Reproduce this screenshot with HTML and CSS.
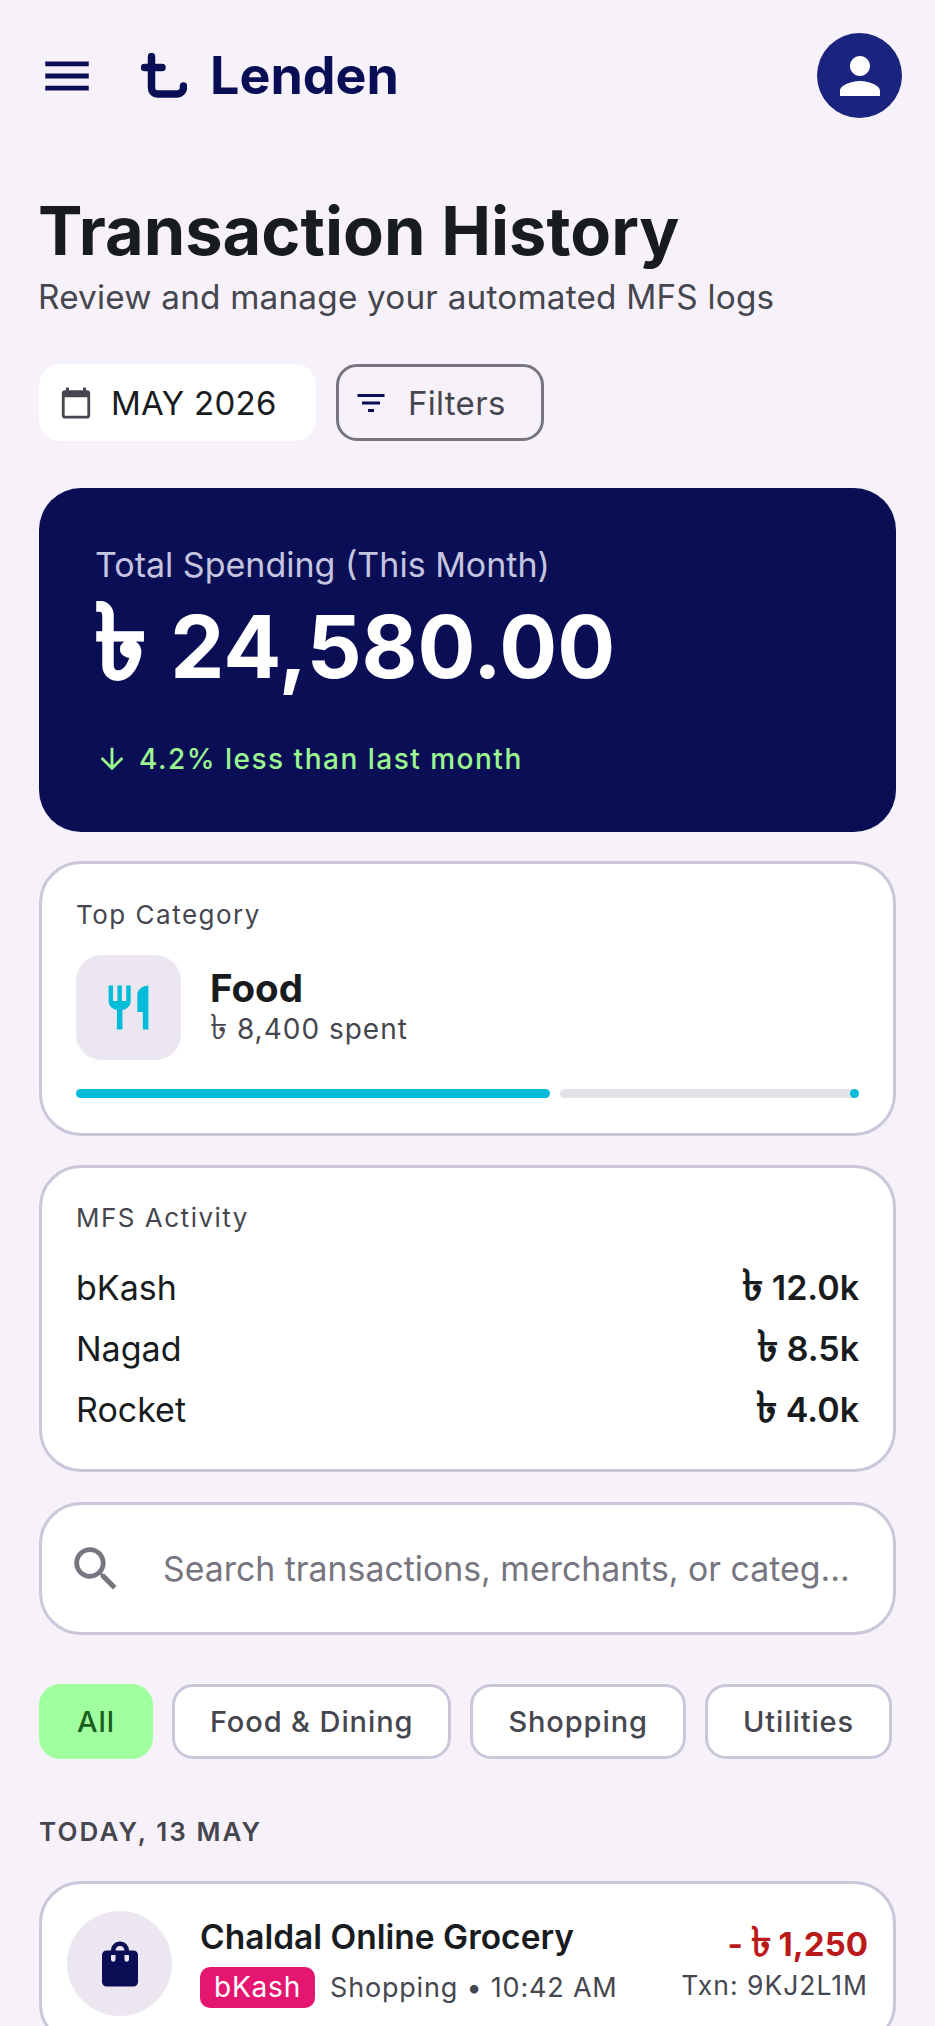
FILE: index.html
```html
<!DOCTYPE html>
<html lang="en">
<head>
    <meta charset="UTF-8">
    <meta name="viewport" content="width=device-width, initial-scale=1.0">
    <title>Lenden - Transaction History</title>
    <link rel="stylesheet" href="styles.css">
</head>
<body>
<div class="page">

    <header class="topbar">
        <svg class="menu-icon" viewBox="0 0 24 24"><path d="M3 18h18v-2H3v2zm0-5h18v-2H3v2zm0-7v2h18V6H3z"/></svg>
        <svg class="logo-mark" viewBox="0 0 46 45"><path d="M10.5 3.5V35a6 6 0 0 0 6 6H36a6.500 6.500 0 0 0 6.500-6.500V33M3.500 14.500H21"/></svg>
        <span class="brand">Lenden</span>
        <div class="avatar">
            <svg viewBox="0 0 24 24"><path d="M12 12c2.210 0 4-1.790 4-4s-1.790-4-4-4-4 1.790-4 4 1.790 4 4 4zm0 2c-2.670 0-8 1.340-8 4v2h16v-2c0-2.660-5.330-4-8-4z"/></svg>
        </div>
    </header>

    <h1>Transaction History</h1>
    <p class="subtitle">Review and manage your automated MFS logs</p>

    <div class="toolbar">
        <div class="month-btn">
            <svg viewBox="0 0 24 24"><path d="M20 3h-1V1h-2v2H7V1H5v2H4c-1.100 0-2 .9-2 2v16c0 1.100.9 2 2 2h16c1.100 0 2-.9 2-2V5c0-1.100-.9-2-2-2zm0 18H4V8h16v13z"/></svg>
            <span>MAY 2026</span>
        </div>
        <div class="filter-btn">
            <svg viewBox="0 0 24 24"><path d="M10 18h4v-2h-4v2zM3 6v2h18V6H3zm3 7h12v-2H6v2z"/></svg>
            <span>Filters</span>
        </div>
    </div>

    <section class="hero">
        <div class="hero-label">Total Spending (This Month)</div>
        <div class="hero-amount"><span class="taka">৳</span> 24,580.00</div>
        <div class="hero-delta">
            <svg viewBox="0 0 24 24"><path d="M20 12l-1.410-1.410L13 16.170V4h-2v12.170l-5.580-5.590L4 12l8 8 8-8z"/></svg>
            <span>4.2% less than last month</span>
        </div>
    </section>

    <section class="card top-category">
        <div class="card-label">Top Category</div>
        <div class="category-row">
            <div class="category-icon">
                <svg viewBox="0 0 24 24"><path d="M11 9H9V2H7v7H5V2H3v7c0 2.120 1.660 3.840 3.750 3.970V22h2.500v-9.030C11.340 12.840 13 11.120 13 9V2h-2v7zm5-3v8h2.500v8H21V2c-2.760 0-5 2.240-5 4z"/></svg>
            </div>
            <div class="category-text">
                <div class="category-name">Food</div>
                <div class="category-spent"><span class="taka">৳</span> 8,400 spent</div>
            </div>
        </div>
        <div class="progress">
            <div class="progress-fill"></div>
            <div class="progress-track"><span class="progress-stop"></span></div>
        </div>
    </section>

    <section class="card mfs">
        <div class="card-label">MFS Activity</div>
        <div class="mfs-rows">
            <div class="mfs-row"><span>bKash</span><b><span class="taka">৳</span> 12.0k</b></div>
            <div class="mfs-row"><span>Nagad</span><b><span class="taka">৳</span> 8.5k</b></div>
            <div class="mfs-row"><span>Rocket</span><b><span class="taka">৳</span> 4.0k</b></div>
        </div>
    </section>

    <div class="card search">
        <svg viewBox="0 0 24 24"><path d="M15.500 14h-.79l-.28-.27C15.410 12.590 16 11.110 16 9.500 16 5.910 13.090 3 9.500 3S3 5.910 3 9.500 5.910 16 9.500 16c1.610 0 3.090-.59 4.230-1.570l.27.28v.79l5 4.990L20.490 19l-4.990-5zm-6 0C7.010 14 5 11.990 5 9.500S7.010 5 9.500 5 14 7.010 14 9.500 11.990 14 9.500 14z"/></svg>
        <span>Search transactions, merchants, or categ...</span>
    </div>

    <div class="chips">
        <div class="chip active">All</div>
        <div class="chip">Food &amp; Dining</div>
        <div class="chip">Shopping</div>
        <div class="chip">Utilities</div>
    </div>

    <div class="day-label">TODAY, 13 MAY</div>

    <article class="card txn">
        <div class="txn-icon">
            <svg viewBox="0 0 24 24"><path fill-rule="evenodd" d="M18 6h-2c0-2.210-1.790-4-4-4S8 3.790 8 6H6c-1.100 0-2 .9-2 2v12c0 1.100.9 2 2 2h12c1.100 0 2-.9 2-2V8c0-1.100-.9-2-2-2zm-8 4c0 .55-.45 1-1 1s-1-.45-1-1V8h2v2zm2-6c1.100 0 2 .9 2 2h-4c0-1.100.9-2 2-2zm4 6c0 .55-.45 1-1 1s-1-.45-1-1V8h2v2z"/></svg>
        </div>
        <div class="txn-main">
            <div class="txn-title">Chaldal Online Grocery</div>
            <div class="txn-meta">
                <span class="badge">bKash</span>
                <span>Shopping • 10:42 AM</span>
            </div>
        </div>
        <div class="txn-side">
            <div class="txn-amount">- <span class="taka">৳</span> 1,250</div>
            <div class="txn-id">Txn: 9KJ2L1M</div>
        </div>
    </article>

</div>
</body>
</html>
```

FILE: styles.css
```css
* {
    box-sizing: border-box;
    margin: 0;
    padding: 0;
}
body {
    font-family: Inter, "Noto Sans", "DejaVu Sans", sans-serif;
    background-color: #f7f2fa;
    color: #191c1e;
}
svg {
    display: block;
    flex: none;
    fill: currentColor;
}
.page {
    height: 2026px;
    overflow: hidden;
    padding: 33px 39px 0;
}
.taka {
    font-size: 1.25em;
    line-height: 0;
}

/* top bar */
.topbar {
    display: flex;
    align-items: center;
    height: 85px;
    color: #0a0f55;
}
.menu-icon {
    width: 58px;
    height: 58px;
    margin-left: -1px;
}
.logo-mark {
    width: 46px;
    height: 45px;
    margin-left: 45px;
    fill: none;
    stroke: currentColor;
    stroke-width: 7.5;
    stroke-linecap: round;
}
.brand {
    margin-left: 23px;
    font-size: 52px;
    font-weight: 700;
}
.avatar {
    display: flex;
    align-items: center;
    justify-content: center;
    width: 85px;
    height: 85px;
    margin-left: auto;
    margin-right: -6px;
    border-radius: 50%;
    background-color: #1a237e;
    color: #fff;
}
.avatar svg {
    width: 60px;
    height: 60px;
}

/* title */
h1 {
    margin-top: 74px;
    margin-left: -1px;
    font-size: 66.7px;
    font-weight: 700;
    line-height: 78px;
}
.subtitle {
    margin-top: 4px;
    margin-left: -1px;
    font-size: 33.3px;
    line-height: 46px;
    letter-spacing: .2px;
    color: #46464f;
}

/* month + filters */
.toolbar {
    display: flex;
    gap: 20px;
    margin-top: 44px;
}
.month-btn,
.filter-btn {
    display: flex;
    align-items: center;
    height: 77px;
    font-size: 33px;
    letter-spacing: .3px;
}
.month-btn {
    width: 277px;
    padding-left: 20px;
    gap: 18px;
    border-radius: 21px;
    background-color: #fff;
}
.month-btn svg {
    width: 34px;
    height: 34px;
    color: #46464f;
}
.filter-btn {
    width: 208px;
    padding-left: 14px;
    gap: 19px;
    border: 3px solid #777680;
    border-radius: 21px;
    color: #46464f;
}
.filter-btn svg {
    width: 36px;
    height: 36px;
    color: #0a0f55;
}

/* total spending */
.hero {
    margin-top: 47px;
    padding: 55px 56px 53px;
    border-radius: 42px;
    background-color: #0a0f55;
    color: #fff;
}
.hero-label {
    font-size: 34px;
    line-height: 44px;
    color: #c5c5e0;
}
.hero-amount {
    margin-top: 13px;
    font-size: 86px;
    font-weight: 700;
    line-height: 94px;
}
.hero-amount .taka {
    margin-right: 4px;
    font-size: 1.2em;
    -webkit-text-stroke: 2px #fff;
}
.hero-delta {
    display: flex;
    align-items: center;
    gap: 10px;
    margin-top: 45px;
    font-size: 28px;
    font-weight: 500;
    line-height: 40px;
    letter-spacing: 1.5px;
    color: #9bf68f;
}
.hero-delta svg {
    width: 34px;
    height: 34px;
}

/* cards */
.card {
    margin-top: 30px;
    border: 3px solid #c9c7d9;
    border-radius: 42px;
    background-color: #fff;
}
.card-label {
    font-size: 26px;
    line-height: 36px;
    letter-spacing: 1.5px;
    color: #46464f;
}
.top-category {
    margin-top: 29px;
    padding: 33px 34px 35px;
}
.category-row {
    display: flex;
    align-items: center;
    gap: 29px;
    margin-top: 22px;
}
.category-icon {
    display: flex;
    align-items: center;
    justify-content: center;
    width: 105px;
    height: 105px;
    border-radius: 26px;
    background-color: #ebe6f0;
    color: #00bcd9;
}
.category-icon svg {
    width: 53px;
    height: 53px;
}
.category-text {
    padding-bottom: 3px;
}
.category-name {
    font-size: 38.5px;
    font-weight: 700;
    line-height: 46px;
}
.category-spent {
    font-size: 28px;
    line-height: 37px;
    letter-spacing: 1px;
    color: #46464f;
}
.progress {
    display: flex;
    gap: 10px;
    height: 9px;
    margin-top: 29px;
}
.progress-fill {
    width: 474px;
    border-radius: 5px;
    background-color: #00bcd9;
}
.progress-track {
    display: flex;
    justify-content: flex-end;
    flex: 1;
    border-radius: 5px;
    background-color: #e1e2e8;
}
.progress-stop {
    width: 9px;
    border-radius: 50%;
    background-color: #00bcd9;
}

/* mfs activity */
.mfs {
    margin-top: 29px;
    padding: 32px 34px 29px;
}
.mfs-rows {
    margin-top: 21px;
}
.mfs-row {
    display: flex;
    justify-content: space-between;
    font-size: 34px;
    line-height: 61px;
}
.mfs-row b {
    font-weight: 600;
}

/* search */
.search {
    display: flex;
    align-items: center;
    gap: 38px;
    height: 133px;
    padding-left: 25px;
    font-size: 33.85px;
    white-space: nowrap;
    color: #777680;
}
.search svg {
    width: 58px;
    height: 58px;
}

/* chips */
.chips {
    display: flex;
    gap: 19px;
    margin-top: 49px;
}
.chip {
    display: flex;
    align-items: center;
    flex: none;
    height: 75px;
    padding: 0 35px;
    border: 3px solid #c9c7d9;
    border-radius: 21px;
    background-color: #fff;
    font-size: 29px;
    font-weight: 450;
    letter-spacing: .9px;
    white-space: nowrap;
    color: #46464f;
}
.chip.active {
    border-color: #a0ff9e;
    background-color: #a0ff9e;
    color: #1b5e20;
}

/* transactions */
.day-label {
    margin-top: 55px;
    font-size: 26px;
    font-weight: 600;
    line-height: 36px;
    letter-spacing: 2.1px;
    color: #46464f;
}
.txn {
    display: flex;
    align-items: flex-start;
    margin-top: 31px;
    padding: 27px 25px 27px 25px;
}
.txn-icon {
    display: flex;
    align-items: center;
    justify-content: center;
    width: 105px;
    height: 105px;
    border-radius: 50%;
    background-color: #ebe6f0;
    color: #0a0f55;
}
.txn-icon svg {
    width: 54px;
    height: 54px;
}
.txn-main {
    margin-left: 28px;
    padding-top: 4px;
}
.txn-title {
    font-size: 33.5px;
    font-weight: 600;
    line-height: 44px;
}
.txn-meta {
    display: flex;
    align-items: center;
    gap: 15px;
    margin-top: 8px;
    font-size: 27px;
    letter-spacing: .8px;
    color: #46464f;
}
.badge {
    padding: 0 14px;
    border-radius: 10px;
    background-color: #e5166f;
    font-size: 28px;
    line-height: 41px;
    color: #fff;
}
.txn-side {
    margin-left: auto;
    padding-top: 11px;
    text-align: right;
}
.txn-amount {
    font-size: 33px;
    font-weight: 700;
    line-height: 44px;
    color: #ba1a1a;
}
.txn-id {
    margin-top: -1px;
    font-size: 26.5px;
    line-height: 40px;
    letter-spacing: 1px;
    color: #46464f;
}
```
